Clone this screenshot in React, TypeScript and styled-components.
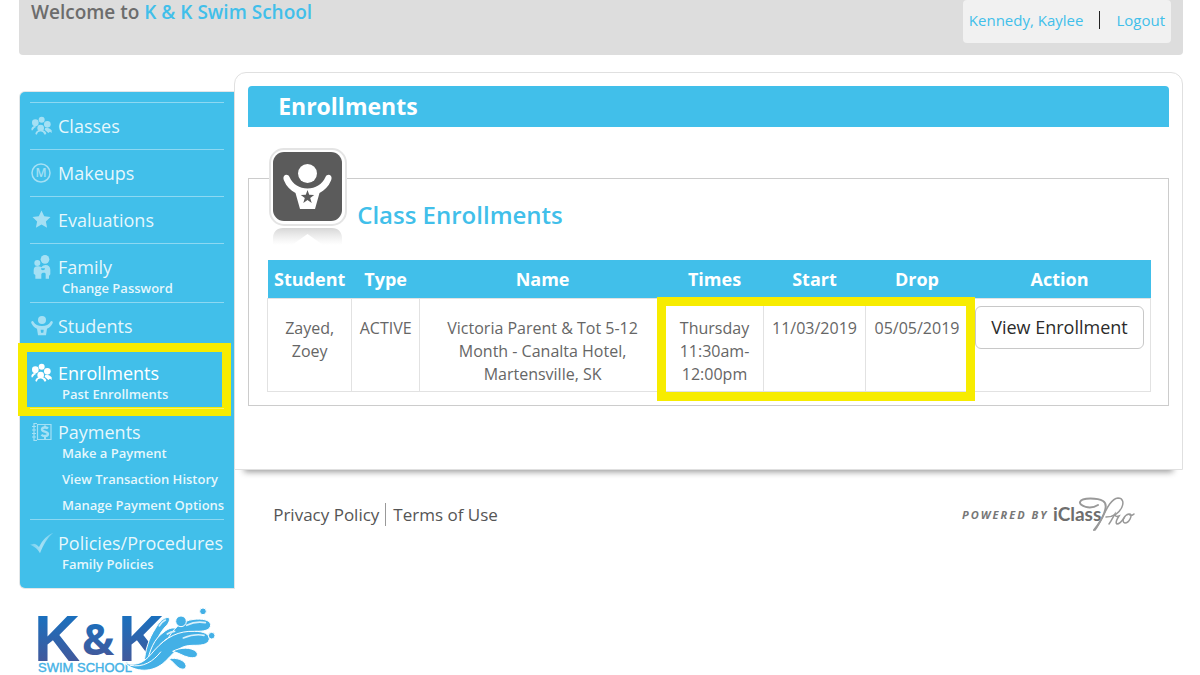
import React from "react";
import styled, { createGlobalStyle, css } from "styled-components";

const blue = "#41bfea";
const highlight = "#f7ec00";

const GlobalStyle = createGlobalStyle`
  *, *::before, *::after { box-sizing: border-box; }
  body {
    margin: 0;
    background: #fff;
    color: #666;
    font-family: "Open Sans", "Noto Sans", sans-serif;
    font-size: 16px;
  }
  a { color: inherit; text-decoration: none; }
  h1, h2, p, ul { margin: 0; padding: 0; font-weight: inherit; }
  ul { list-style: none; }
`;

const Page = styled.div`
  padding: 0 17px 0 19px;
`;

const Header = styled.header`
  display: flex;
  justify-content: space-between;
  align-items: flex-start;
  min-height: 55px;
  padding: 0 12px;
  background: #ddd;
  border-radius: 0 0 4px 4px;
`;

const Welcome = styled.p`
  font-size: 19px;
  font-weight: 600;
  line-height: 24px;
  color: #6c6c6c;

  a { color: ${blue}; }
`;

const Account = styled.div`
  display: flex;
  align-items: center;
  gap: 16px;
  height: 43px;
  padding: 0 6px 3px;
  background: #f1f1f1;
  border-radius: 4px;
  font-size: 15px;
  color: ${blue};
`;

const AccountDivider = styled.span`
  width: 1px;
  height: 18px;
  background: #222;
`;

const Columns = styled.div`
  display: flex;
  align-items: flex-start;
`;

const SideColumn = styled.div`
  flex: 0 0 215px;
  padding: 37px 0 0 1px;
`;

const MainColumn = styled.div`
  flex: 1;
  min-width: 0;
  padding-top: 17px;
`;

const Nav = styled.nav`
  padding: 10px;
  background: ${blue};
  border-radius: 5px 0 0 5px;
  box-shadow: 0 0 0 1px #e2e6e8;
  color: rgba(255, 255, 255, 0.88);
`;

const NavItem = styled.li<{ $active?: boolean }>`
  position: relative;
  border-top: 1px solid rgba(255, 255, 255, 0.4);

  ${(p) =>
    p.$active &&
    css`
      &::after {
        content: "";
        position: absolute;
        inset: -7px -7px -8px -12px;
        border: 9px solid ${highlight};
        pointer-events: none;
      }
    `}
`;

const NavLink = styled.a<{ $active?: boolean }>`
  display: flex;
  align-items: center;
  gap: 4px;
  height: 46px;
  padding-bottom: 1px;
  font-size: 18px;
  white-space: nowrap;
  color: ${(p) => (p.$active ? "#fff" : "inherit")};

  svg {
    flex: none;
    opacity: ${(p) => (p.$active ? 1 : 0.52)};
  }
`;

const SubList = styled.ul`
  margin-top: -15px;
  padding: 0 0 1px 32px;
  font-size: 13px;
  font-weight: 600;
  line-height: 26px;
  white-space: nowrap;
`;

const LogoBox = styled.div`
  padding: 20px 0 0 14px;

  svg { display: block; }
`;

const Panel = styled.main`
  padding: 13px 13px 63px;
  background: #fff;
  border: 1px solid #e0e0e0;
  border-radius: 12px 12px 0 0;
  box-shadow: 0 12px 6px -10px rgba(0, 0, 0, 0.4);
`;

const PanelTitle = styled.h1`
  padding: 0 30px;
  background: ${blue};
  border-radius: 4px 4px 0 0;
  color: #fff;
  font-size: 23px;
  font-weight: 700;
  line-height: 41px;
`;

const Section = styled.section`
  margin-top: 51px;
  padding: 0 17px 13px 18px;
  border: 1px solid #ccc;
`;

const SectionHead = styled.div`
  display: flex;
  align-items: flex-start;
  gap: 10px;
  height: 81px;
  padding-left: 2px;

  svg {
    flex: none;
    margin-top: -31px;
  }
`;

const SectionTitle = styled.h2`
  padding-top: 19px;
  color: ${blue};
  font-size: 24px;
  font-weight: 600;
  line-height: 34px;
`;

const TableWrap = styled.div`
  position: relative;
`;

const Table = styled.table`
  width: 100%;
  border-collapse: collapse;
  table-layout: fixed;
  text-align: center;
`;

const Col = styled.col<{ $width?: number }>`
  width: ${(p) => (p.$width ? `${p.$width}px` : "auto")};
`;

const HeadCell = styled.th`
  height: 38px;
  padding: 0;
  background: ${blue};
  color: #fff;
  font-size: 18px;
  font-weight: 700;
`;

const Cell = styled.td<{ $flush?: boolean }>`
  height: 93px;
  padding: ${(p) => (p.$flush ? "7px 6px" : "18px 4px 4px")};
  border: 1px solid #e2e2e2;
  line-height: 23px;
  vertical-align: top;
`;

const HighlightFrame = styled.div`
  position: absolute;
  top: 37px;
  right: 176px;
  bottom: -9px;
  width: 318px;
  border: 9px solid ${highlight};
  pointer-events: none;
`;

const ViewButton = styled.button`
  width: 100%;
  height: 43px;
  padding: 0;
  background: #fff;
  border: 1px solid #c8c8c8;
  border-radius: 6px;
  color: #2b2b2b;
  font-family: inherit;
  font-size: 18px;
`;

const Footer = styled.footer`
  display: flex;
  justify-content: space-between;
  align-items: center;
  padding: 26px 48px 0 39px;
  color: #555;
`;

const FooterLinks = styled.div`
  display: flex;
  align-items: center;
  font-size: 17px;

  a + a {
    margin-left: 6px;
    padding-left: 7px;
    border-left: 1px solid #999;
  }
`;

const PeopleIcon = () => (
  <svg width="24" height="20" viewBox="0 0 72 60" fill="#fff" aria-hidden="true">
    <circle cx="35" cy="11" r="9" />
    <circle cx="16" cy="20" r="10" />
    <circle cx="52" cy="25" r="10" />
    <circle cx="32" cy="36" r="10" />
    <path d="M4 40c0-6 5-10 11-10l5 3c-5 1-8 3-10 7l-4 4z" />
    <path d="M46 35c8 0 15 2 19 8v8l-5-4-5 4-11-10z" />
    <path d="M16 54c1-6 5-10 9-11h14c5 1 9 5 10 11l-5 2-5-7-7-3-8 3-4 7z" />
  </svg>
);

const MakeupIcon = () => (
  <svg width="24" height="22" viewBox="0 0 24 22" aria-hidden="true">
    <circle cx="11" cy="11" r="9" fill="none" stroke="#fff" strokeWidth="1.5" />
    <text x="11" y="15" textAnchor="middle" fontSize="12" fontWeight="600" fill="#fff">M</text>
  </svg>
);

const StarIcon = () => (
  <svg width="24" height="20" viewBox="0 0 24 20" fill="#fff" aria-hidden="true">
    <path d="M11.500.500l2.700 5.800 6.300.8-4.600 4.300 1.200 6.300-5.600-3.100-5.600 3.100 1.200-6.300L2.500 7.100l6.300-.8z" />
  </svg>
);

const FamilyIcon = () => (
  <svg width="24" height="24" viewBox="0 0 72 72" fill="#fff" aria-hidden="true">
    <circle cx="45" cy="13" r="13" />
    <circle cx="22" cy="24" r="9" />
    <path
      fillRule="evenodd"
      d="M11 46c0-8 4-12 11-12 6 0 9 1 12 3 4-5 8-7 13-7 8 0 14 5 14 14v14l-4 5v8H47V58c0-4-2-5-6-5s-7 2-7 5v13H16V60l-5-4zM33 40c0 4 2 6 6 6s6-2 6-6z"
    />
  </svg>
);

const StudentIcon = () => (
  <svg width="24" height="20" viewBox="0 0 72 60" fill="#fff" aria-hidden="true">
    <circle cx="36" cy="12" r="12" />
    <path
      fillRule="evenodd"
      d="M4 17c2-3 6-2 7 1 4 8 13 12 25 12s21-4 25-12c1-3 5-4 7-1 1 2 0 4-1 6-4 8-10 12-16 15l-3 20H24l-3-20C15 35 9 31 5 23c-1-2-2-4-1-6zm28 24l1 9h7l1-9z"
    />
  </svg>
);

const PaymentIcon = () => (
  <svg width="24" height="20" viewBox="0 0 24 20" aria-hidden="true">
    <path
      d="M7 1.500H4v17h3M2 4.500h4M2 8h4M2 11.500h4M2 15h4M7.500 2.500H21v15H7.500z"
      fill="none"
      stroke="#fff"
      strokeWidth="1.200"
    />
    <path
      d="M18 6.500c-1.500-1.500-6-1.500-6 1 0 2.800 6 1.500 6 4.600 0 2.600-5 2.400-6.600.7"
      fill="none"
      stroke="#fff"
      strokeWidth="2.400"
    />
    <path d="M15 3.500v2M15 14.500v2.500" stroke="#fff" strokeWidth="2" />
  </svg>
);

const CheckIcon = () => (
  <svg width="24" height="22" viewBox="0 0 72 66" aria-hidden="true">
    <defs>
      <linearGradient id="checkFade" x1="0" x2="1">
        <stop offset="0" stopColor="#fff" stopOpacity="0.5" />
        <stop offset="0.5" stopColor="#fff" />
        <stop offset="1" stopColor="#fff" stopOpacity="0.5" />
      </linearGradient>
    </defs>
    <path d="M0 38l12-3c7 2 11 5 15 10C38 23 52 9 70 2 52 17 40 38 30 64c-4-9-15-21-30-26z" fill="url(#checkFade)" />
  </svg>
);

const EnrollmentBadge = () => (
  <svg width="78" height="98" viewBox="0 0 78 98" aria-hidden="true">
    <defs>
      <linearGradient id="reflection" x1="0" y1="0" x2="0" y2="1">
        <stop offset="0" stopColor="#999" stopOpacity="0.4" />
        <stop offset="1" stopColor="#bbb" stopOpacity="0" />
      </linearGradient>
    </defs>
    <rect x="1" y="1" width="76" height="76" rx="14" fill="#fff" stroke="#e4e4e4" strokeWidth="2" />
    <rect x="4" y="4" width="69" height="69" rx="11" fill="#5b5b5b" />
    <circle cx="38.500" cy="25.500" r="9.500" fill="#fff" />
    <path
      d="M15 28c1.500-2 4.500-1.500 5.500 1 3.500 7.500 10 11.500 18 11.500s14.500-4 18-11.500c1-2.500 4-3 5.500-1 1 1.500.5 3 0 4.500-2.500 6-6.500 10-11.500 12.500L46 61H31l-4.500-16C21.500 42.500 17.500 38.500 15 32.500c-.5-1.500-1-3 0-4.500z"
      fill="#fff"
    />
    <path d="M38.500 42l1.700 4.800 5 .2-4 3.100 1.500 4.900-4.200-2.900-4.200 2.900 1.500-4.900-4-3.100 5-.2z" fill="#5b5b5b" />
    <path d="M4 97V90c0-6 4-10 10-10h49c6 0 10 4 10 10v7H54L38.500 86 23 97z" fill="url(#reflection)" />
  </svg>
);

const SwimLogo = () => (
  <svg width="186" height="67" viewBox="-4 0 186 67" role="img" aria-label="K & K Swim School">
    <defs>
      <linearGradient id="logoBlue" x1="0" y1="0" x2="0" y2="1">
        <stop offset="0.2" stopColor="#1b6fbd" />
        <stop offset="0.8" stopColor="#41599c" />
      </linearGradient>
    </defs>
    <g fill="url(#logoBlue)" fontWeight="700">
      <text x="-4" y="53" fontSize="64" fontFamily="Liberation Sans, Arial, sans-serif">K</text>
      <text x="44" y="47" fontSize="43" fontFamily="Open Sans, sans-serif">&amp;</text>
      <text x="80" y="53" fontSize="64" fontFamily="Liberation Sans, Arial, sans-serif">K</text>
    </g>
    <text x="0" y="64" fontSize="13" fill="#45b2e6" stroke="#45b2e6" strokeWidth="0.4" fontFamily="Liberation Sans, Arial, sans-serif">
      SWIM SCHOOL
    </text>
    <g transform="translate(82 -8) scale(0.3333)" fill="#43b0e6" stroke="#fff" strokeWidth="3">
      <path d="M72 190c4-40 14-74 34-104 12-22 24-32 38-34 8 2 4 16-4 24-22 22-42 60-46 114z" />
      <path d="M80 196c8-44 22-80 52-100 14-12 30-16 40-8 4 10-6 18-18 22-34 12-50 44-54 86z" />
      <path d="M140 124c16-36 44-62 82-66 22-2 48 0 50 16 0 18-22 20-44 20-34 2-58 14-88 30z" />
      <path d="M14 190c44 10 62-6 90-40 36-40 72-58 120-56 26 0 46 8 44 24-4 18-28 18-50 18-34 0-52 16-76 42-34 38-86 44-128 12z" />
      <path d="M158 154c22-12 56-14 72 2 8 14-6 20-24 16-18-4-30-14-48-18z" />
      <path d="M146 176c24-4 48 4 52 20 2 14-14 14-24 6-10-8-16-18-28-26z" />
      <circle cx="183" cy="64" r="16" />
      <circle cx="249" cy="34" r="10" />
      <circle cx="275" cy="107" r="10" />
    </g>
    <g transform="translate(82 -8) scale(0.3333)" fill="none" stroke="#d9f0fb" strokeWidth="5" strokeLinecap="round">
      <path d="M118 78c4-8 10-14 18-18M142 102c8-6 14-8 22-8M200 76c16-8 36-12 56-8M190 114c20-8 42-12 62-8" />
      <path d="M30 196c40 8 70-12 92-40" stroke="#fff" strokeWidth="3" />
    </g>
  </svg>
);

const PoweredByLogo = () => (
  <svg width="174" height="38" viewBox="0 0 174 38" role="img" aria-label="Powered by iClassPro">
    <text x="1" y="23" fontSize="11" fontWeight="700" fontStyle="italic" letterSpacing="2" fill="#777" fontFamily="Open Sans, sans-serif">
      POWERED BY
    </text>
    <text x="92" y="25" fontSize="19" fontWeight="700" fill="#6e6e6e" fontFamily="Lato, sans-serif">iClass</text>
    <g fill="none" stroke="#999" strokeWidth="1.500" strokeLinecap="round">
      <path d="M137 9c-8 5-19 1-18-3 2-5 18-4 23-1 7 4-1 19-9 29" strokeWidth="2" />
      <path d="M134 34c8-10 13-31 23-32 10 0 4 19-12 19" />
      <path d="M148 28c3-4 4-7 6-10 0 2 1 3 4 2-2 3-4 7-2 8 3 0 5-3 7-6" />
      <path d="M168 18c-5 1-8 8-4 9 4 0 8-8 5-9-2 0 1 3 4 0" />
    </g>
  </svg>
);

type NavEntry = {
  label: string;
  Icon: React.FC;
  active?: boolean;
  children?: string[];
};

const navEntries: NavEntry[] = [
  { label: "Classes", Icon: PeopleIcon },
  { label: "Makeups", Icon: MakeupIcon },
  { label: "Evaluations", Icon: StarIcon },
  { label: "Family", Icon: FamilyIcon, children: ["Change Password"] },
  { label: "Students", Icon: StudentIcon },
  { label: "Enrollments", Icon: PeopleIcon, active: true, children: ["Past Enrollments"] },
  {
    label: "Payments",
    Icon: PaymentIcon,
    children: ["Make a Payment", "View Transaction History", "Manage Payment Options"],
  },
  { label: "Policies/Procedures", Icon: CheckIcon, children: ["Family Policies"] },
];

const columns: { title: string; width?: number }[] = [
  { title: "Student", width: 84 },
  { title: "Type", width: 68 },
  { title: "Name" },
  { title: "Times", width: 98 },
  { title: "Start", width: 102 },
  { title: "Drop", width: 103 },
  { title: "Action", width: 182 },
];

export default function App() {
  return (
    <>
      <GlobalStyle />
      <Page>
        <Header>
          <Welcome>
            Welcome to <a href="#home">K &amp; K Swim School</a>
          </Welcome>
          <Account>
            <a href="#account">Kennedy, Kaylee</a>
            <AccountDivider />
            <a href="#logout">Logout</a>
          </Account>
        </Header>
        <Columns>
          <SideColumn>
            <Nav>
              <ul>
                {navEntries.map(({ label, Icon, active, children }) => (
                  <NavItem key={label} $active={active}>
                    <NavLink href="#" $active={active}>
                      <Icon />
                      {label}
                    </NavLink>
                    {children && (
                      <SubList>
                        {children.map((child) => (
                          <li key={child}>
                            <a href="#">{child}</a>
                          </li>
                        ))}
                      </SubList>
                    )}
                  </NavItem>
                ))}
              </ul>
            </Nav>
            <LogoBox>
              <SwimLogo />
            </LogoBox>
          </SideColumn>
          <MainColumn>
            <Panel>
              <PanelTitle>Enrollments</PanelTitle>
              <Section>
                <SectionHead>
                  <EnrollmentBadge />
                  <SectionTitle>Class Enrollments</SectionTitle>
                </SectionHead>
                <TableWrap>
                  <Table>
                    <colgroup>
                      {columns.map((c) => (
                        <Col key={c.title} $width={c.width} />
                      ))}
                    </colgroup>
                    <thead>
                      <tr>
                        {columns.map((c) => (
                          <HeadCell key={c.title}>{c.title}</HeadCell>
                        ))}
                      </tr>
                    </thead>
                    <tbody>
                      <tr>
                        <Cell>Zayed, Zoey</Cell>
                        <Cell>ACTIVE</Cell>
                        <Cell>
                          Victoria Parent &amp; Tot 5-12
                          <br />
                          Month - Canalta Hotel,
                          <br />
                          Martensville, SK
                        </Cell>
                        <Cell>Thursday 11:30am-12:00pm</Cell>
                        <Cell>11/03/2019</Cell>
                        <Cell>05/05/2019</Cell>
                        <Cell $flush>
                          <ViewButton type="button">View Enrollment</ViewButton>
                        </Cell>
                      </tr>
                    </tbody>
                  </Table>
                  <HighlightFrame />
                </TableWrap>
              </Section>
            </Panel>
            <Footer>
              <FooterLinks>
                <a href="#privacy">Privacy Policy</a>
                <a href="#terms">Terms of Use</a>
              </FooterLinks>
              <PoweredByLogo />
            </Footer>
          </MainColumn>
        </Columns>
      </Page>
    </>
  );
}
